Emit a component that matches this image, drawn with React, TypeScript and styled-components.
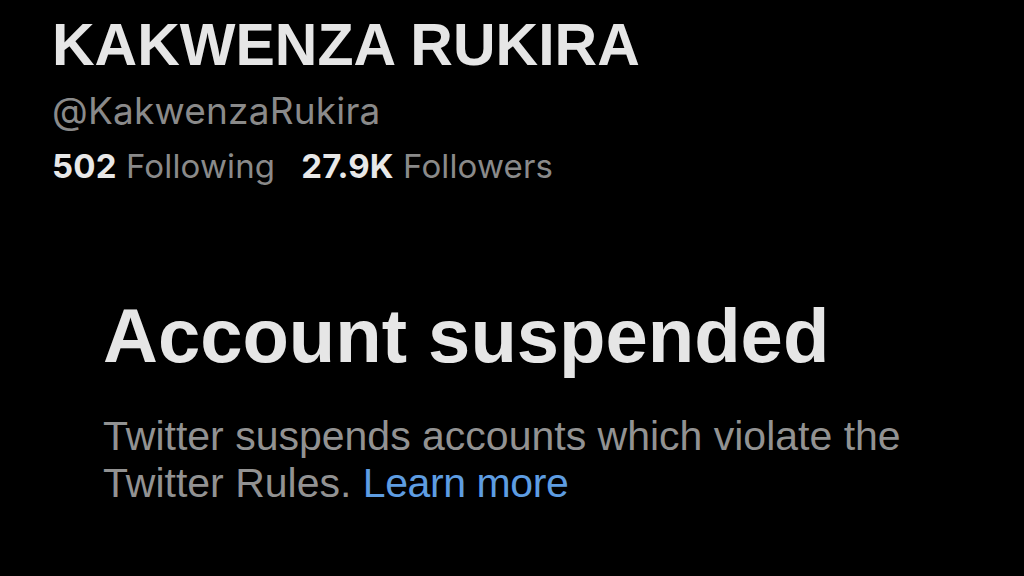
import styled, { createGlobalStyle } from "styled-components";

const GlobalStyle = createGlobalStyle`
  html, body {
    margin: 0;
    padding: 0;
    background: #000;
  }
  body {
    font-family: "Liberation Sans", Arial, sans-serif;
  }
`;

const Page = styled.div`
  width: 1024px;
  height: 576px;
  background: #000;
  overflow: hidden;
  box-sizing: border-box;
  padding: 13px 0 0 52px;
`;

const Profile = styled.div`
  display: flex;
  flex-direction: column;
`;

const Name = styled.div`
  font-family: "Liberation Sans", Arial, sans-serif;
  font-weight: 700;
  font-size: 59px;
  line-height: 64px;
  color: #e6e6e6;
`;

const Handle = styled.div`
  margin-top: 10px;
  font-family: Inter, "Liberation Sans", sans-serif;
  font-size: 37px;
  line-height: 48px;
  letter-spacing: 0.2px;
  color: #8a8a8a;
`;

const Stats = styled.div`
  margin-top: 11px;
  display: flex;
  gap: 26px;
  font-family: Inter, "Liberation Sans", sans-serif;
  font-size: 33px;
  line-height: 40px;
  letter-spacing: 0.15px;
`;

const Stat = styled.span`
  color: #8a8a8a;
`;

const Count = styled.b`
  font-weight: 700;
  color: #e8e8e8;
`;

const Notice = styled.section`
  margin: 108px 0 0 51px;
  width: 840px;
`;

const Title = styled.h1`
  margin: 0;
  font-family: "Liberation Sans", Arial, sans-serif;
  font-weight: 700;
  font-size: 76px;
  line-height: 84px;
  color: #e6e6e6;
`;

const Message = styled.p`
  margin: 35px 0 0;
  font-family: "Liberation Sans", Arial, sans-serif;
  font-size: 41px;
  line-height: 47px;
  color: #929292;
`;

const Link = styled.a`
  color: #5e9de2;
  text-decoration: none;
  letter-spacing: -0.4px;
`;

export default function App() {
  return (
    <>
      <GlobalStyle />
      <Page>
        <Profile>
          <Name>KAKWENZA RUKIRA</Name>
          <Handle>@KakwenzaRukira</Handle>
          <Stats>
            <Stat>
              <Count>502</Count> Following
            </Stat>
            <Stat>
              <Count>27.9K</Count> Followers
            </Stat>
          </Stats>
        </Profile>
        <Notice>
          <Title>Account suspended</Title>
          <Message>
            Twitter suspends accounts which violate the Twitter Rules.{" "}
            <Link href="#">Learn more</Link>
          </Message>
        </Notice>
      </Page>
    </>
  );
}
